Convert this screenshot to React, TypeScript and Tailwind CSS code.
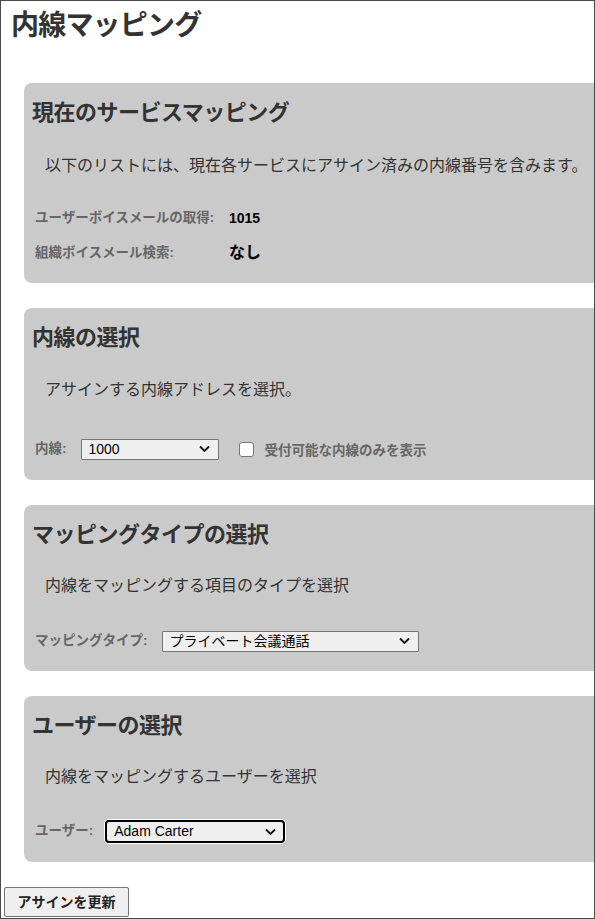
import React from "react";

const font = { fontFamily: '"Liberation Sans", "Noto Sans CJK JP", sans-serif' };

function Chevron() {
  return (
    <svg width="11" height="7" viewBox="0 0 11 7" className="absolute right-[9px] top-1/2 -translate-y-1/2 pointer-events-none">
      <polyline points="1,1 5.5,5.5 10,1" fill="none" stroke="#111" strokeWidth="1.8" />
    </svg>
  );
}

function Select({ value, width, focused }: { value: string; width: string; focused?: boolean }) {
  return (
    <div className={`relative ${width} ${focused ? "h-[23px] rounded-[4px] ring-1 ring-white" : "h-[21px]"}`}>
      <div
        className={`h-full w-full flex items-center pl-[7px] text-[14px] text-black bg-[#efefef] ${
          focused ? "border-2 border-black rounded-[4px] pl-[6px]" : "border border-[#767676] rounded-[1px]"
        }`}
      >
        {value}
      </div>
      <Chevron />
    </div>
  );
}

function Panel({
  title,
  desc,
  children,
  descGap,
  rowGap,
  pb,
}: {
  title: string;
  desc: string;
  children: React.ReactNode;
  descGap: string;
  rowGap: string;
  pb: string;
}) {
  return (
    <section className={`ml-[23px] w-full shrink-0 rounded-[8px] bg-[#cacaca] pl-[8px] pt-[15px] ${pb}`}>
      <h2 className="text-[22px] leading-[30px] font-bold tracking-[-0.5px] text-[#333]">{title}</h2>
      <p className={`${descGap} ml-[13px] text-[16px] leading-[24px] text-[#333]`}>{desc}</p>
      <div className={rowGap}>{children}</div>
    </section>
  );
}

export default function App() {
  return (
    <div className="w-[595px] h-[919px] border border-[#4a4a4a] overflow-hidden bg-white" style={font}>
      <h1 className="mt-[8px] pl-[10px] text-[28px] leading-[34px] font-bold tracking-[-0.8px] text-[#333]">
        内線マッピング
      </h1>

      <div className="mt-[40px] flex flex-col gap-[25px]">
        <Panel
          title="現在のサービスマッピング"
          desc="以下のリストには、現在各サービスにアサイン済みの内線番号を含みます。"
          descGap="mt-[26px]"
          rowGap="mt-[30px]"
          pb="pb-[20px]"
        >
          <div className="grid grid-cols-[194px_1fr] gap-y-[15px] ml-[3px]">
            <div className="h-[20px] flex items-center text-[13.5px] font-bold text-[#666]">ユーザーボイスメールの取得:</div>
            <div className="h-[20px] flex items-center text-[14px] font-bold text-black">1015</div>
            <div className="h-[20px] flex items-center text-[13.5px] font-bold text-[#666]">組織ボイスメール検索:</div>
            <div className="h-[20px] flex items-center text-[16px] font-bold text-black">なし</div>
          </div>
        </Panel>

        <Panel
          title="内線の選択"
          desc="アサインする内線アドレスを選択。"
          descGap="mt-[25px]"
          rowGap="mt-[36px]"
          pb="pb-[20px]"
        >
          <div className="ml-[3px] h-[22px] flex items-center">
            <span className="text-[13.5px] font-bold text-[#666]">内線:</span>
            <div className="ml-[14px]">
              <Select value="1000" width="w-[138px]" />
            </div>
            <input
              type="checkbox"
              className="ml-[20px] appearance-none w-[15px] h-[15px] rounded-[3px] border border-[#767676] bg-white"
            />
            <span className="ml-[11px] mt-[4px] text-[13.5px] font-bold text-[#666]">受付可能な内線のみを表示</span>
          </div>
        </Panel>

        <Panel
          title="マッピングタイプの選択"
          desc="内線をマッピングする項目のタイプを選択"
          descGap="mt-[24px]"
          rowGap="mt-[32px]"
          pb="pb-[19px]"
        >
          <div className="ml-[3px] h-[22px] flex items-center">
            <span className="text-[13.5px] font-bold text-[#666]">マッピングタイプ:</span>
            <div className="ml-[14px]">
              <Select value="プライベート会議通話" width="w-[257px]" />
            </div>
          </div>
        </Panel>

        <Panel
          title="ユーザーの選択"
          desc="内線をマッピングするユーザーを選択"
          descGap="mt-[24px]"
          rowGap="mt-[31px]"
          pb="pb-[19px]"
        >
          <div className="ml-[3px] h-[23px] flex items-center">
            <span className="text-[13.5px] font-bold text-[#666]">ユーザー:</span>
            <div className="ml-[12px]">
              <Select value="Adam Carter" width="w-[180px]" focused />
            </div>
          </div>
        </Panel>
      </div>

      <button className="mt-[25px] ml-[3px] w-[125px] h-[30px] border border-[#767676] rounded-[2px] bg-[#efefef] text-[14px] font-bold text-[#222]">
        アサインを更新
      </button>
    </div>
  );
}
